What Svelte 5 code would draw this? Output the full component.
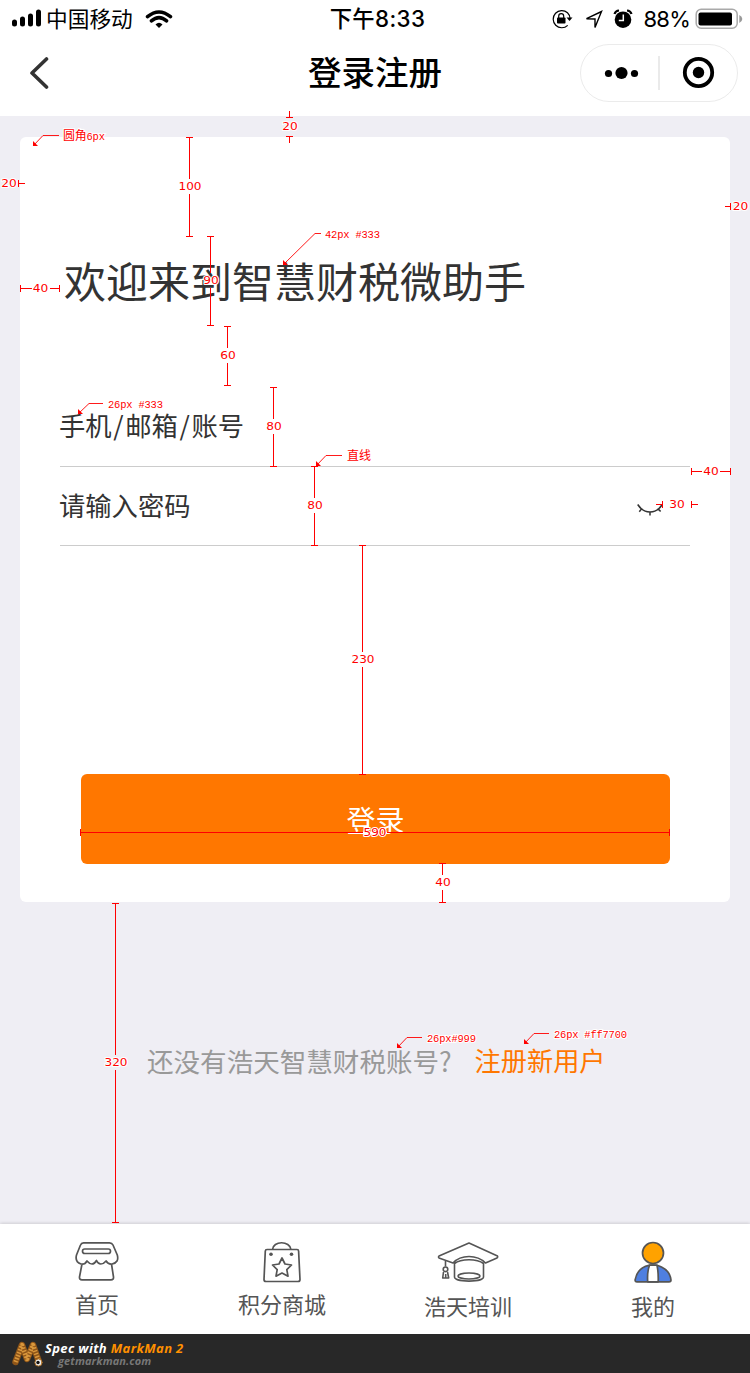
<script>
  const spans = [
    { x: 189, a: 137, b: 236, at: 186, t: '100' },
    { x: 210, a: 236, b: 325, at: 280, t: '90' },
    { x: 227, a: 326, b: 385, at: 355, t: '60' },
    { x: 273, a: 387, b: 466, at: 426, t: '80' },
    { x: 314, a: 466, b: 545, at: 505, t: '80' },
    { x: 362, a: 545, b: 774, at: 659, t: '230' },
    { x: 442, a: 863, b: 902, at: 882, t: '40' },
    { x: 115, a: 903, b: 1222, at: 1062, t: '320' }
  ];
  const widths = [
    { y: 288, a: 20, b: 59, t: '40', x: 40.5, g: 9 },
    { y: 471, a: 691, b: 730, t: '40', x: 711, g: 9 },
    { y: 832, a: 80, b: 669, t: '590', x: 375, g: 12 }
  ];
  const notes = [
    { p: [33, 146], e: [43, 135.5], r: 59, x: 63, y: 140, cjk: '圆角', t: '6px', w: 42 },
    { p: [283, 265], e: [315, 233.5], r: 321, x: 325, y: 238, cjk: '', t: '42px #333', w: 55 },
    { p: [78, 414], e: [89, 403.5], r: 103, x: 108, y: 408, cjk: '', t: '26px #333', w: 55 },
    { p: [316, 466], e: [326, 455.5], r: 342, x: 347, y: 460, cjk: '直线', t: '', w: 24 },
    { p: [397, 1048], e: [407, 1037.5], r: 422, x: 427, y: 1042, cjk: '', t: '26px#999', w: 49 },
    { p: [524, 1044], e: [534, 1033.5], r: 549, x: 554, y: 1038, cjk: '', t: '26px #ff7700', w: 73 }
  ];
  const num = (t) => (t.length === 3 ? 23 : 15.5);
</script>

<div class="page">
  <header>
    <div class="status">
      <div class="left">
        <svg width="30" height="20" viewBox="0 0 30 20"><g stroke="#000" stroke-width="5" stroke-linecap="round"><path d="M2.5 13v2M10.500 10v5M18.500 7v8M26.500 3v12" /></g></svg>
        <span class="carrier">中国移动</span>
        <svg class="wifi" width="28" height="20" viewBox="0 0 28 20" fill="none" stroke="#000" stroke-width="3.5"><path d="M2.500 7.700Q14-1.800 25.500 7.700M6.400 11.900Q14 5.300 21.600 11.900" stroke-linecap="round" /><path d="M10.500 15.500Q14 12 17.500 15.500L14 19Z" fill="#000" stroke="none" /></svg>
      </div>
      <div class="time">下午8:33</div>
      <div class="right">
        <svg width="21" height="20" viewBox="0 0 21 20"><path d="M15.5 3.7A8.6 8.6 0 1 0 15.7 16.4M15.5 3.7Q18 6 18.2 10" fill="none" stroke="#000" stroke-width="1.2" /><path d="M14.500 8.500h6l-3 3.600z" /><rect x="5" y="8.5" width="8.5" height="6" rx=".8" /><path d="M6.7 9V7.2a2.5 2.5 0 0 1 5 0V9" fill="none" stroke="#000" stroke-width="1.2" /></svg>
        <svg class="nav" width="18" height="19" viewBox="0 0 18 19"><path d="M1.500 8.700L16.500 1.500L10 17.500V9Z" fill="none" stroke="#000" stroke-width="1.400" /></svg>
        <svg class="alarm" width="20" height="20" viewBox="0 0 20 20"><circle cx="10" cy="10.7" r="8.3" /><path d="M1.5 5Q2.5 1.7 6 1.5M18.5 5Q17.5 1.7 14 1.5" fill="none" stroke="#000" stroke-width="2.2" /><path d="M10.3 5.5v6H5.8" fill="none" stroke="#fff" stroke-width="1.5" /></svg>
        <span class="pct">88%</span>
        <svg width="48" height="22" viewBox="0 0 48 22"><rect x="1.2" y="1.2" width="41" height="19" rx="5" fill="#fff" stroke="#a9a9a9" stroke-width="1.5" /><rect x="3.5" y="4.5" width="33.5" height="13" rx="2" /><path d="M44.3 7q3 1.5 3 4t-3 4z" fill="#999" /></svg>
      </div>
    </div>
    <div class="titlebar">
      <svg class="back" width="22" height="36" viewBox="0 0 22 36"><path d="M19.500 4L5 18L19.500 32" fill="none" stroke="#333" stroke-width="3.6" stroke-linecap="round" stroke-linejoin="round" /></svg>
      <h1>登录注册</h1>
      <div class="capsule">
        <svg width="158" height="58" viewBox="0 0 158 58"><rect x=".5" y=".5" width="157" height="57" rx="28.5" fill="#fff" stroke="#ebebeb" /><circle cx="28.5" cy="29.5" r="3.6" /><circle cx="41.5" cy="29" r="6.1" /><circle cx="54.5" cy="29.5" r="3.6" /><path d="M79 12v34" stroke="#e3e3e3" stroke-width="1.5" /><circle cx="118.5" cy="28.5" r="13.7" fill="none" stroke="#000" stroke-width="3.8" /><circle cx="118.5" cy="28.5" r="5.7" /></svg>
      </div>
    </div>
  </header>

  <main>
    <section class="card">
      <h2>欢迎来到智慧财税微助手</h2>
      <div class="field account"><span>手机<i>/</i>邮箱<i>/</i>账号</span></div>
      <div class="field pass"><span>请输入密码</span>
        <svg width="26" height="14" viewBox="0 0 26 14" fill="none" stroke="#333" stroke-width="1.5"><path d="M.7 1.5Q5.5 9 13 9T25.3 1.5M4.7 5.6L2.3 8.7M13 9v3.5M21 5.6l2.6 3" /></svg>
      </div>
      <button>登录</button>
    </section>
    <p class="signup"><span>还没有浩天智慧财税账号?</span><a href="#register">注册新用户</a></p>
  </main>

  <nav class="tabs">
    <div class="tab home">
      <svg width="44" height="42" viewBox="0 0 44 42" fill="none" stroke="#555" stroke-width="1.7" stroke-linejoin="round" stroke-linecap="round"><path d="M8.5 1.8h26q2.5 0 3.5 2.2l4.3 10q2 7.5-5.2 9-4 .5-6-3-2.5 3-5.3 3T21.5 19.500q-2 3.500-4.500 3.500t-5-3q-2 3.800-6 3Q-.3 21 1.500 14L5.500 4q.8-2.200 3-2.200ZM7 23L4.500 36q-.3 2.800 2.500 2.800h29q2.800 0 2.500-2.800L36.500 23" /><rect x="7.500" y="8" width="28" height="4.500" rx="2.250" /></svg>
      <span>首页</span>
    </div>
    <div class="tab mall">
      <svg width="40" height="42" viewBox="0 0 40 42" fill="none" stroke="#555" stroke-width="1.7" stroke-linejoin="round"><path d="M5 8.500h30q1.500 0 1.600 1.500l1.400 28.500q0 2-2 2H4q-2 0-2-2L3.300 10Q3.400 8.500 5 8.500ZM10.500 8.500C11 -.5 28-.5 29 8.500M20 17l3 6 6.500 1-4.700 4.600 1.200 6.600-6-3.100-6 3.100 1.200-6.600L10.500 24l6.500-1Z" /><g fill="#555" stroke="none"><circle cx="9" cy="13.300" r="1.800" /><circle cx="29.500" cy="13.300" r="1.800" /></g></svg>
      <span>积分商城</span>
    </div>
    <div class="tab train">
      <svg width="62" height="42" viewBox="0 0 62 42" fill="none" stroke="#555" stroke-width="1.6" stroke-linejoin="round"><path d="M32 2L60.500 15Q61 16 60 17L48.500 22Q42 15.500 32 15.500T16 22L2 17Q1 16 2 15ZM17.500 22.500V36C18 41.500 46 41.500 46.500 36V22.500C40 17.500 24 17.500 17.500 22.500Z" /><ellipse cx="32" cy="35" rx="11" ry="3" /><path d="M8.500 20v5.500M6.500 31L5.700 37h6L10.500 31M8.700 33v4" /><circle cx="8.500" cy="28.300" r="2.300" /></svg>
      <span>浩天培训</span>
    </div>
    <div class="tab mine">
      <svg width="38" height="42" viewBox="0 0 38 42" stroke="#555" stroke-width="1.700" stroke-linejoin="round"><circle cx="19" cy="12" r="10.500" fill="#ffa200" /><path d="M15 24.300Q23 23.200 27.500 26Q36 30 37 39q0 1.800-2 1.800H3q-2 0-1.900-2Q3.500 26.500 15 24.300Z" fill="#4f7fe0" /><path d="M15.500 24.200h7.500Q24.500 31 24.200 40.800H13.700Q13 31 15.500 24.200Z" fill="#fff" /></svg>
      <span>我的</span>
    </div>
  </nav>

  <footer>
    <svg width="34" height="30" viewBox="0 0 34 30" fill="none" stroke-linecap="round" stroke-linejoin="round"><path d="M4.500 23L11 6L16 20L22 6L28 23" stroke="#8f5518" stroke-width="6.500" /><path d="M4.500 23L11 6L16 20L22 6L28 23" stroke="#d9973c" stroke-width="4.500" stroke-dasharray="1.500 1.500" stroke-linecap="butt" /><circle cx="27.500" cy="23.500" r="3.600" fill="#eee" stroke="#a96b20" /><circle cx="27" cy="23.500" r="1.700" fill="#111" /></svg>
    <div class="brand"><b>Spec with <em>MarkMan 2</em></b><small>getmarkman.com</small></div>
  </footer>

  <svg class="marks" width="750" height="1373" viewBox="0 0 750 1373">
    <g fill="none" stroke="#f00" shape-rendering="crispEdges">
      {#each spans as s}
        <path d="M{s.x - 3} {s.a + 0.5}h7M{s.x + 0.5} {s.a}V{s.at - 7}M{s.x + 0.5} {s.at + 8}V{s.b}M{s.x - 3} {s.b + 0.5}h7" />
      {/each}
      {#each widths as s}
        <path d="M{s.a + 0.5} {s.y - 3}v7M{s.a} {s.y + 0.5}H{s.x - s.g}M{s.x + s.g} {s.y + 0.5}H{s.b}M{s.b + 0.5} {s.y - 3}v7" />
      {/each}
      <path d="M289.500 111v6M286 117.500h7M286 136.500h7M289.500 136v7M18.500 180v7M18 183.500h7M725 206.500h5M730.500 203v7M656 504.500h6M662.500 501v7M691.500 501v7M691 504.500h7" />
    </g>
    {#each notes as n}
      <path d="M{n.p[0]} {n.p[1]}L{n.e[0]} {n.e[1]}H{n.r}" fill="none" stroke="#f00" stroke-width=".9" />
      <path d="M{n.p[0]} {n.p[1]}v-5l5 5z" fill="#f00" />
      <text class="note" x={n.x} y={n.y} textLength={n.w}><tspan class="han">{n.cjk}</tspan>{n.t}</text>
    {/each}
    {#each spans as s}
      <text class="num" x={s.x + 1} y={s.at + 4} textLength={num(s.t)} lengthAdjust="spacingAndGlyphs">{s.t}</text>
    {/each}
    {#each widths as s}
      <text class="num" x={s.x} y={s.y + 4} textLength={num(s.t)} lengthAdjust="spacingAndGlyphs">{s.t}</text>
    {/each}
    <text class="num" x="290" y="130" textLength="15.500" lengthAdjust="spacingAndGlyphs">20</text>
    <text class="num" x="9" y="187" textLength="15.500" lengthAdjust="spacingAndGlyphs">20</text>
    <text class="num" x="740.500" y="210" textLength="15.500" lengthAdjust="spacingAndGlyphs">20</text>
    <text class="num" x="677" y="508" textLength="15.500" lengthAdjust="spacingAndGlyphs">30</text>
  </svg>
</div>

<style>
  :global(body) { margin: 0; }
  .page { position: relative; width: 750px; height: 1373px; overflow: hidden; background: #efeef4; font-family: "Noto Sans CJK SC", sans-serif; color: #333; display: flex; flex-direction: column; }
  svg { display: block; flex: none; }
  header { height: 116px; background: #fff; flex: none; }
  .status { height: 38px; display: grid; grid-template-columns: 1fr auto 1fr; align-items: center; color: #000; padding: 0 7px 0 12px; }
  .left, .right { display: flex; align-items: center; }
  .right { justify-content: flex-end; }
  .carrier { font-size: 21.700px; line-height: 36px; margin: 0 12px 2px 4px; }
  .time { font: 500 22.300px/38px Inter, "Noto Sans CJK SC", sans-serif; letter-spacing: .4px; }
  .nav { margin: 0 10px 0 12px; }
  .alarm { margin-right: 11px; }
  .pct { font: 22px/38px Inter, sans-serif; margin-right: 5px; letter-spacing: -.8px; }
  .titlebar { height: 78px; display: grid; grid-template-columns: 158px auto 158px; justify-content: space-between; align-items: center; padding: 0 12px 0 27px; }
  .titlebar .back { margin-bottom: 8px; }
  h1 { margin: 0 15px 12px 0; font-size: 33.500px; line-height: 50px; font-weight: 500; color: #000; }
  .capsule { justify-self: end; margin-bottom: 8px; }
  main { flex: 1; padding: 21px 20px 0; }
  .card { box-sizing: border-box; height: 765px; background: #fff; border-radius: 6px; padding: 100px 40px 0; display: flex; flex-direction: column; }
  h2 { margin: 0 0 60px 4px; font-size: 42px; line-height: 86px; font-weight: 400; white-space: nowrap; height: 90px; }
  .field { box-sizing: border-box; display: flex; justify-content: space-between; height: 80px; border-bottom: 1px solid #ccc; font-size: 26.300px; line-height: 76px; }
  .field span { margin-left: -1px; }
  .field.pass { height: 79px; padding-right: 27px; }
  .pass svg { margin-top: 36px; }
  i { font-style: normal; padding: 0 1.700px; }
  button { align-self: center; width: 589px; height: 90px; margin: 228px 0 0 1px; padding: 0; border: 0; border-radius: 6px; background: #f70; color: #fff; font: 400 29px/88px "Noto Sans CJK SC", sans-serif; }
  .signup { margin: 139px 0 0 127px; font-size: 26.550px; line-height: 39px; color: #999; display: flex; gap: 23px; white-space: nowrap; }
  .signup a { color: #f70; text-decoration: none; font-size: 26.200px; }
  .tabs { flex: none; height: 110px; background: #fff; box-shadow: 0 -1px 3px #0002; display: grid; grid-template-columns: 194px 176px 196px 174px; box-sizing: border-box; }
  .tab { display: flex; flex-direction: column; align-items: center; padding-top: 17px; font-size: 22px; line-height: 30px; color: #555; }
  .tab span { margin-top: 5px; }
  .train span, .mine span { margin-top: 7px; }
  footer { height: 39px; flex: none; background: #282828; display: flex; align-items: center; padding-left: 11px; }
  .brand { font-family: "Open Sans", sans-serif; font-style: italic; display: flex; flex-direction: column; }
  .brand b { font-size: 13px; line-height: 14px; color: #fff; white-space: nowrap; letter-spacing: .36px; }
  .brand em { color: #ff9000; }
  .brand small { font-size: 11px; line-height: 12px; font-weight: 700; color: #777; margin-left: 13px; letter-spacing: .1px; }
  .marks { position: absolute; inset: 0; pointer-events: none; }
  .num, .note { fill: #f00; stroke: #fff; stroke-width: 2px; paint-order: stroke; }
  .num { font: 11px "DejaVu Sans", sans-serif; text-anchor: middle; }
  .note { font: 10.500px "Liberation Mono", "Noto Sans CJK SC", monospace; }
  .han { font-size: 12px; }
</style>
